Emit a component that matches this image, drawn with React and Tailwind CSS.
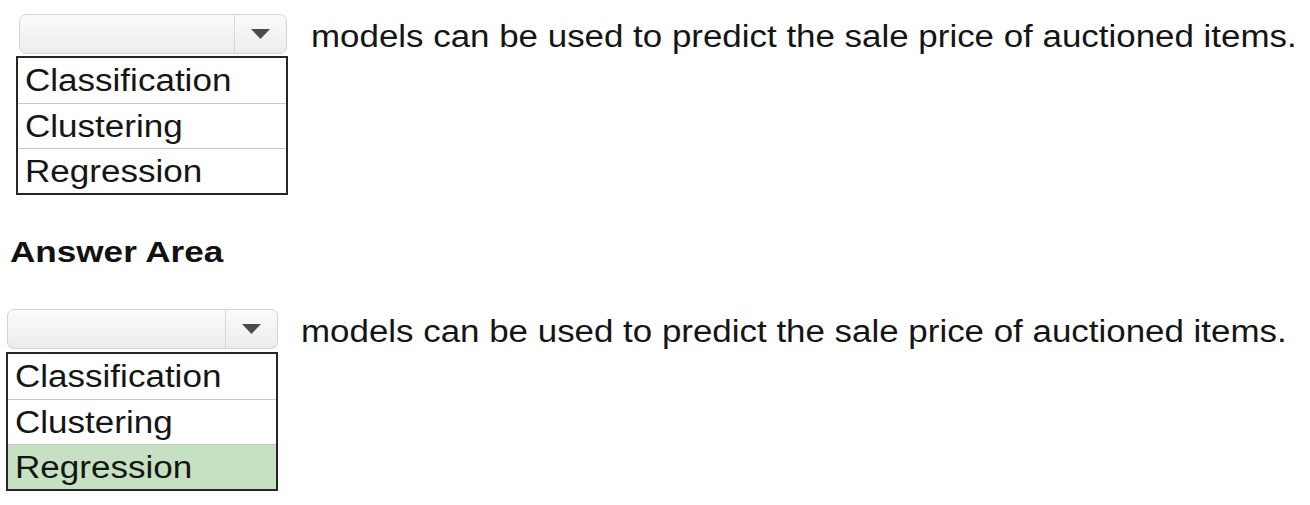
import React from 'react'

const OPTIONS = ['Classification', 'Clustering', 'Regression']
const SENTENCE = 'models can be used to predict the sale price of auctioned items.'

/* ── Closed select box with the grey arrow button ── */
function SelectBox({ className }) {
  return (
    <div
      className={`flex h-[40px] rounded-[7px] border border-[#d3d3d3] bg-gradient-to-b from-[#fbfbfb] to-[#ececec] ${className}`}
    >
      <div className="flex-1" />
      <div className="flex w-[52px] items-center justify-center border-l border-[#d6d6d6]">
        <svg width="19" height="10" viewBox="0 0 19 10">
          <polygon points="0,0 19,0 9.5,10" fill="#4b4b4b" />
        </svg>
      </div>
    </div>
  )
}

/* ── Open option list ── */
function OptionList({ selected, className }) {
  return (
    <div className={`flex flex-col border-2 border-[#262626] bg-white ${className}`}>
      {OPTIONS.map((opt, i) => (
        <div
          key={opt}
          className={`flex h-[45px] items-center pl-[7px] ${i > 0 ? 'border-t border-[#c9c9c9]' : ''} ${
            selected === opt ? 'bg-[#c6e1c2]' : ''
          }`}
        >
          <span className="inline-block origin-left scale-x-[1.13] text-[31px] leading-none text-[#151515]">
            {opt}
          </span>
        </div>
      ))}
    </div>
  )
}

function Question({ selected, listClass, selectClass, gap }) {
  return (
    <div className="flex items-start">
      <div className="flex w-[272px] flex-col">
        <SelectBox className={selectClass} />
        <OptionList selected={selected} className={listClass} />
      </div>
      <p className={`mt-[3px] whitespace-nowrap text-[31px] leading-[40px] text-[#151515] ${gap}`}>
        <span className="inline-block origin-left scale-x-[1.126]">{SENTENCE}</span>
      </p>
    </div>
  )
}

export default function App() {
  return (
    <div className="h-[505px] w-[1310px] overflow-hidden bg-white font-['Liberation_Sans',Arial,sans-serif]">
      <div className="pl-[16px] pt-[14px]">
        <Question selectClass="ml-[3px] w-[268px]" listClass="mt-[2px]" gap="ml-[23px]" />
      </div>

      <h2 className="mt-[42px] pl-[10px] text-[30px] font-bold leading-none text-[#111]">
        <span className="inline-block origin-left scale-x-[1.17]">Answer Area</span>
      </h2>

      <div className="mt-[42px] pl-[6px]">
        <Question
          selected="Regression"
          selectClass="ml-[1px] w-[271px]"
          listClass="mt-[3px]"
          gap="ml-[23px]"
        />
      </div>
    </div>
  )
}
